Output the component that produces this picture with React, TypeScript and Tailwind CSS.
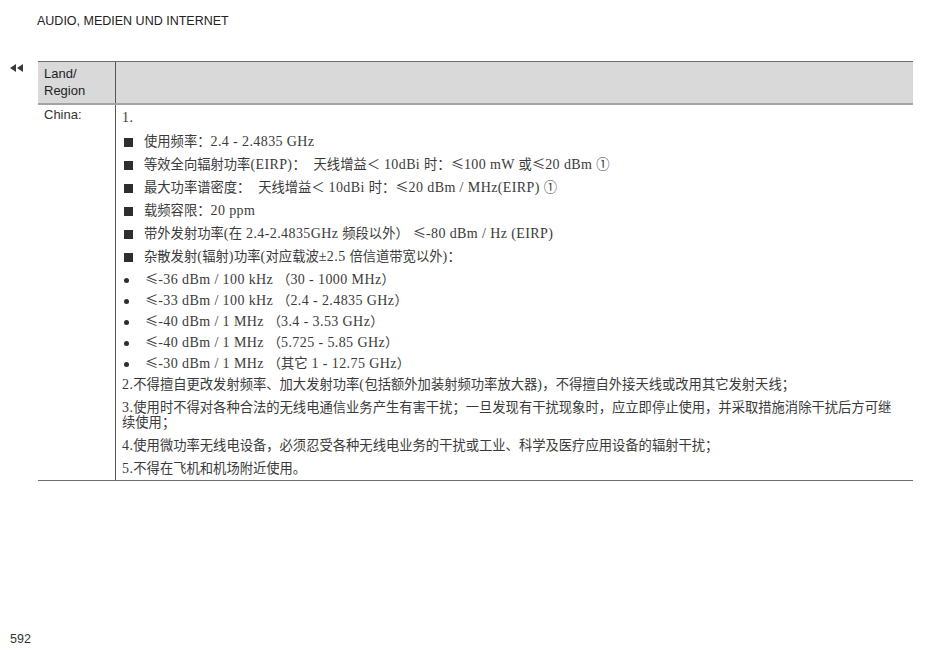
import React from "react";

const latin = { fontFamily: '"Liberation Serif", "Times New Roman", serif' };
const cjkFont = { fontFamily: '"Noto Sans CJK SC", "Noto Sans", sans-serif' };
const sans = { fontFamily: '"Liberation Sans", Arial, sans-serif' };

function Mixed({ text }: { text: string }) {
  const parts = text.split(/([\x20-\x7E±]+)/);
  return (
    <>
      {parts.map((p, i) =>
        p === "" ? null : i % 2 === 1 ? (
          <span key={i} className="inline-block h-[15px] leading-[15px] text-[14px] tracking-[0.4px]" style={latin}>
            {p}
          </span>
        ) : (
          <span key={i} className="inline-block h-[15px] leading-[15px] text-[13.3px]" style={cjkFont}>
            {p}
          </span>
        )
      )}
    </>
  );
}

function Square() {
  return <span className="inline-block w-[9px] h-[9px] bg-[#2e2e2e] mr-[11px] ml-[2px] align-[-1px]" />;
}
function Dot() {
  return <span className="inline-block w-[5px] h-[5px] rounded-full bg-[#2e2e2e] ml-[2px] mr-[16px] align-[1px]" />;
}

const squares = [
  "使用频率：2.4 - 2.4835 GHz",
  "等效全向辐射功率(EIRP)：  天线增益＜ 10dBi 时：≤100 mW 或≤20 dBm ①",
  "最大功率谱密度：  天线增益＜ 10dBi 时：≤20 dBm / MHz(EIRP) ①",
  "载频容限：20 ppm",
  "带外发射功率(在 2.4-2.4835GHz 频段以外） ≤-80 dBm / Hz (EIRP)",
  "杂散发射(辐射)功率(对应载波±2.5 倍信道带宽以外)：",
];
const dots = [
  "≤-36 dBm / 100 kHz （30 - 1000 MHz）",
  "≤-33 dBm / 100 kHz （2.4 - 2.4835 GHz）",
  "≤-40 dBm / 1 MHz （3.4 - 3.53 GHz）",
  "≤-40 dBm / 1 MHz （5.725 - 5.85 GHz）",
  "≤-30 dBm / 1 MHz （其它 1 - 12.75 GHz）",
];

const line = "h-[15px] leading-[15px] whitespace-pre";

export default function App() {
  return (
    <div className="w-[950px] h-[657px] bg-white flex flex-col text-[#2a2a2a]">
      <div className="pl-[37px] pt-[13px] text-[12.5px] leading-[16px] text-[#222]" style={sans}>
        AUDIO, MEDIEN UND INTERNET
      </div>
      <div className="mt-[32px] flex">
        <div className="w-[38px] pl-[10px] pt-[3px]">
          <svg width="13" height="8" viewBox="0 0 13 8">
            <polygon points="6,0 6,8 0,4" fill="#3a3a3a" />
            <polygon points="13,0 13,8 7,4" fill="#3a3a3a" />
          </svg>
        </div>
        <div className="w-[875px]">
          <div className="flex border-t border-[#6e6e6e] bg-[#d9d9d9] border-b-2 border-b-[#a3a3a3] h-[44px]">
            <div
              className="w-[77px] pl-[6px] pt-[3px] text-[13px] leading-[17px] font-medium text-[#1e1e1e]"
              style={sans}
            >
              Land/
              <br />
              Region
            </div>
            <div className="flex-1 border-l border-[#555]" />
          </div>
          <div className="flex border-b border-[#6e6e6e]">
            <div className="w-[77px] pl-[6px] pt-[2px] text-[13px] leading-[16px] text-[#333]" style={sans}>
              China:
            </div>
            <div className="flex-1 border-l border-[#555] pl-[6px] pt-[5px] pb-[5px] text-[13px] leading-[15px] text-[#3a3a3a]">
              <div className={line}>
                <Mixed text="1." />
              </div>
              {squares.map((s, i) => (
                <div key={i} className={"mt-[8px] " + line}>
                  <Square />
                  <Mixed text={s} />
                </div>
              ))}
              {dots.map((s, i) => (
                <div key={i} className={(i === 0 ? "mt-[8px] " : "mt-[6px] ") + line}>
                  <Dot />
                  <Mixed text={s} />
                </div>
              ))}
              <div className={"mt-[6px] " + line}>
                <Mixed text="2.不得擅自更改发射频率、加大发射功率(包括额外加装射频功率放大器)，不得擅自外接天线或改用其它发射天线；" />
              </div>
              <div className={"mt-[8px] " + line}>
                <Mixed text="3.使用时不得对各种合法的无线电通信业务产生有害干扰；一旦发现有干扰现象时，应立即停止使用，并采取措施消除干扰后方可继" />
              </div>
              <div className={line}>
                <Mixed text="续使用；" />
              </div>
              <div className={"mt-[8px] " + line}>
                <Mixed text="4.使用微功率无线电设备，必须忍受各种无线电业务的干扰或工业、科学及医疗应用设备的辐射干扰；" />
              </div>
              <div className={"mt-[8px] " + line}>
                <Mixed text="5.不得在飞机和机场附近使用。" />
              </div>
            </div>
          </div>
        </div>
      </div>
      <div className="mt-auto pl-[10px] pb-[10px] text-[12.5px] leading-[16px] text-[#333]" style={sans}>
        592
      </div>
    </div>
  );
}
